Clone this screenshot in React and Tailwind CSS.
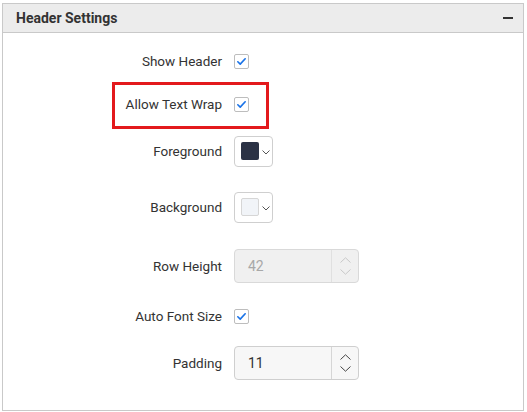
import { useState } from 'react';

function Check({ checked }) {
  return (
    <div className="flex h-[15px] w-[15px] items-center justify-center rounded-[2px] border border-[#bdbdbd] bg-white">
      {checked && (
        <svg width="11" height="11" viewBox="0 0 12 12" fill="none">
          <path d="M2 6.3 4.6 8.8 10 3" stroke="#1a73e8" strokeWidth="1.8" strokeLinecap="round" strokeLinejoin="round" />
        </svg>
      )}
    </div>
  );
}

function ColorPick({ color, bordered }) {
  return (
    <div className="flex h-[31px] w-[39px] items-center rounded-[4px] border border-[#cfcfcf] bg-white pl-[6px]">
      <div
        className={`h-[18px] w-[18px] rounded-[2px] ${bordered ? 'border border-[#d6d6d6]' : ''}`}
        style={{ background: color }}
      ></div>
      <svg className="ml-[3px] mt-[3px]" width="8" height="5" viewBox="0 0 8 5" fill="none">
        <path d="M0.5 0.5 4 4 7.5 0.5" stroke="#555" strokeWidth="1" />
      </svg>
    </div>
  );
}

function NumberBox({ value, disabled }) {
  const stroke = disabled ? '#c8c8c8' : '#444';
  return (
    <div
      className={`flex h-[34px] w-[125px] rounded-[4px] border ${
        disabled ? 'border-[#d9d9d9] bg-[#f0f0f0]' : 'border-[#cfcfcf] bg-[#f7f7f7]'
      }`}
    >
      <div className={`flex flex-1 items-center pl-[13px] text-[14px] ${disabled ? 'text-[#a8a8a8]' : 'text-[#333]'}`}>
        {value}
      </div>
      <div className={`flex w-[27px] flex-col items-center justify-center gap-[6px] border-l ${disabled ? 'border-[#e0e0e0]' : 'border-[#d6d6d6]'}`}>
        <svg width="11" height="6" viewBox="0 0 11 6" fill="none">
          <path d="M0.5 5.5 5.5 0.8 10.5 5.5" stroke={stroke} strokeWidth="1" />
        </svg>
        <svg width="11" height="6" viewBox="0 0 11 6" fill="none">
          <path d="M0.5 0.5 5.5 5.2 10.5 0.5" stroke={stroke} strokeWidth="1" />
        </svg>
      </div>
    </div>
  );
}

function Row({ label, h, children, highlight }) {
  return (
    <div className={`relative flex items-center ${h}`}>
      <div className="w-[219px] text-right text-[13.5px] text-[#333]">{label}</div>
      <div className="ml-3">{children}</div>
      {highlight && (
        <div className="absolute left-[109px] top-0 h-[47px] w-[157px] border-[3px] border-[#e3191c]"></div>
      )}
    </div>
  );
}

export default function App() {
  const [open] = useState(true);
  return (
    <div className="h-[412px] w-[527px] bg-white pl-[2px] pt-[3px]" style={{ fontFamily: 'Roboto, "Liberation Sans", sans-serif' }}>
      <div className="flex h-[408px] w-[522px] flex-col border border-[#c9c9c9]">
        <div className="flex h-[29px] shrink-0 items-center justify-between border-b border-[#c9c9c9] bg-[#ececec] pl-[13px] pr-[10px]">
          <span className="text-[14px] font-bold text-[#333]">Header Settings</span>
          <span className="h-[2px] w-[10px] bg-[#333]"></span>
        </div>
        {open && (
          <div className="pt-[7px]">
            <Row label="Show Header" h="h-[42px]">
              <Check checked />
            </Row>
            <Row label="Allow Text Wrap" h="h-[44px]" highlight>
              <Check checked />
            </Row>
            <Row label="Foreground" h="h-[50px]">
              <ColorPick color="#2b3245" />
            </Row>
            <Row label="Background" h="h-[62px]">
              <ColorPick color="#f1f4f8" bordered />
            </Row>
            <Row label="Row Height" h="h-[56px]">
              <NumberBox value="42" disabled />
            </Row>
            <Row label="Auto Font Size" h="h-[44px]">
              <Check checked />
            </Row>
            <Row label="Padding" h="h-[50px]">
              <NumberBox value="11" />
            </Row>
          </div>
        )}
      </div>
    </div>
  );
}
